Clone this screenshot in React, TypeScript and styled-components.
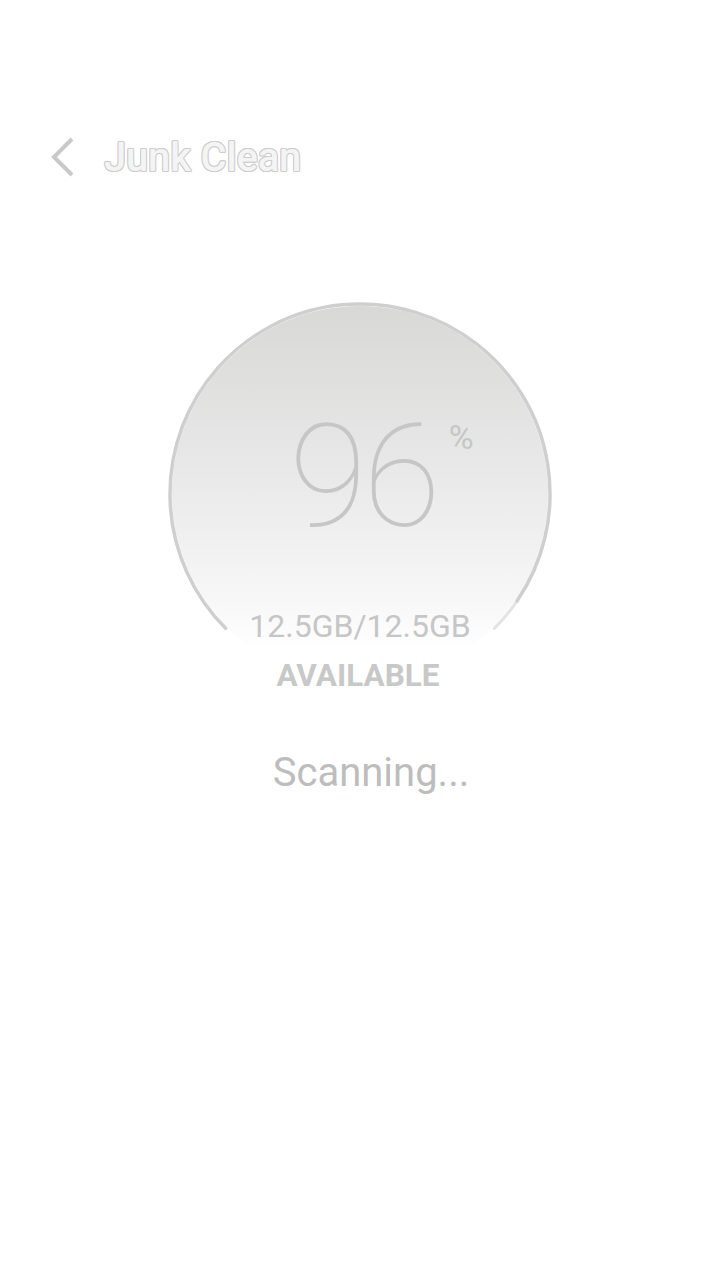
import React from "react";
import styled, { createGlobalStyle } from "styled-components";

const Global = createGlobalStyle`
  html, body { margin: 0; padding: 0; background: #ffffff; }
  body { font-family: Roboto, "Liberation Sans", sans-serif; }
`;

const Page = styled.div`
  width: 720px;
  height: 1280px;
  background: #ffffff;
  display: flex;
  flex-direction: column;
  align-items: stretch;
`;

const Header = styled.header`
  display: flex;
  align-items: center;
  height: 60px;
  margin-top: 127px;
  padding-left: 50px;
  gap: 28px;
`;

const BackButton = styled.button`
  border: none;
  background: none;
  padding: 0;
  width: 26px;
  height: 44px;
  display: flex;
  align-items: center;
  justify-content: center;
`;

const Title = styled.h1`
  margin: 0;
  font-family: Roboto, "Liberation Sans", sans-serif;
  font-weight: 500;
  font-size: 40px;
  color: #f4f4f4;
  letter-spacing: -0.2px;
  text-shadow:
    1px 0 0 #cdcdcd,
    -1px 0 0 #cdcdcd,
    0 1px 0 #cdcdcd,
    0 -1px 0 #cdcdcd,
    0.7px 0.7px 0 #cdcdcd,
    -0.7px 0.7px 0 #cdcdcd,
    0.7px -0.7px 0 #cdcdcd,
    -0.7px -0.7px 0 #cdcdcd;
`;

const Gauge = styled.div`
  position: relative;
  align-self: center;
  width: 384px;
  height: 384px;
  margin-top: 115px;
  display: flex;
  flex-direction: column;
  align-items: center;
`;

const Disc = styled.div`
  position: absolute;
  inset: 4px;
  border-radius: 50%;
  background: linear-gradient(180deg, #d8d8d7 0%, #e9e9e9 45%, #f7f7f7 78%, #ffffff 92%);
`;

const Ring = styled.svg`
  position: absolute;
  inset: 0;
`;

const NumberWrap = styled.div`
  position: relative;
  margin-top: 105px;
  margin-left: 6px;
  display: flex;
`;

const BigNumber = styled.span`
  font-family: Roboto, "Liberation Sans", sans-serif;
  font-weight: 100;
  font-size: 142px;
  line-height: 1;
  color: #c6c6c6;
  letter-spacing: -4px;
`;

const Percent = styled.span`
  position: absolute;
  left: 100%;
  top: 13px;
  margin-left: 12px;
  font-family: Roboto, "Liberation Sans", sans-serif;
  font-weight: 400;
  font-size: 34px;
  line-height: 1;
  color: #c6c6c6;
`;

const Usage = styled.div`
  position: relative;
  margin-top: 61px;
  font-family: Roboto, "Liberation Sans", sans-serif;
  font-weight: 400;
  font-size: 32px;
  line-height: 1;
  color: #c6c6c6;
`;

const Available = styled.div`
  position: relative;
  margin-top: 18px;
  margin-left: -4px;
  font-family: Roboto, "Liberation Sans", sans-serif;
  font-weight: 700;
  font-size: 31.5px;
  line-height: 1;
  color: #c8c8c8;
`;

const Status = styled.div`
  align-self: center;
  margin-top: 67px;
  margin-left: 22px;
  font-family: Roboto, "Liberation Sans", sans-serif;
  font-weight: 400;
  font-size: 40px;
  line-height: 1;
  color: #bdbdbd;
`;

const C = 192;
const R = 190;
const pt = (deg: number) => {
  const a = (deg * Math.PI) / 180;
  return `${(C + R * Math.cos(a)).toFixed(2)} ${(C + R * Math.sin(a)).toFixed(2)}`;
};
const arc = (from: number, to: number) =>
  `M ${pt(from)} A ${R} ${R} 0 ${to - from > 180 ? 1 : 0} 1 ${pt(to)}`;

export default function App() {
  const percent = 96;
  const start = 135;
  const end = start + (270 * percent) / 100;
  return (
    <Page>
      <Global />
      <Header>
        <BackButton aria-label="back">
          <svg width="26" height="44" viewBox="0 0 26 44">
            <path d="M22 4 L4 22 L22 40" fill="none" stroke="#c9c9c9" strokeWidth="4" strokeLinecap="butt" strokeLinejoin="miter" />
          </svg>
        </BackButton>
        <Title>Junk Clean</Title>
      </Header>
      <Gauge>
        <Disc />
        <Ring width="384" height="384" viewBox="0 0 384 384">
          <path d={arc(end, 405)} fill="none" stroke="#e3e3e3" strokeWidth="3" strokeLinecap="round" />
          <path d={arc(start, end)} fill="none" stroke="#cfcfcf" strokeWidth="3.5" strokeLinecap="round" />
        </Ring>
        <NumberWrap>
          <BigNumber>{percent}</BigNumber>
          <Percent>%</Percent>
        </NumberWrap>
        <Usage>12.5GB/12.5GB</Usage>
        <Available>AVAILABLE</Available>
      </Gauge>
      <Status>Scanning...</Status>
    </Page>
  );
}
